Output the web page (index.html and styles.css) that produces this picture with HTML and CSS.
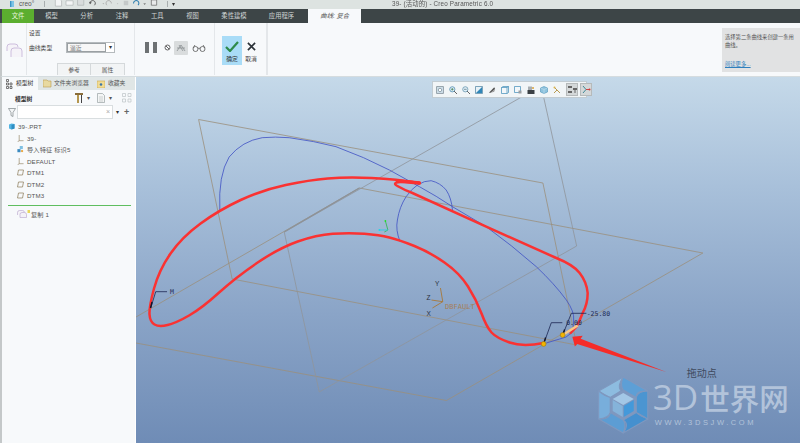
FILE: index.html
```html
<!DOCTYPE html>
<html lang="zh">
<head>
<meta charset="utf-8">
<title>39- (活动的) - Creo Parametric 6.0</title>
<link rel="stylesheet" href="styles.css">
</head>
<body>
<div class="app">
  <header class="titlebar">
    <div class="quick">
      <svg class="q-logo" viewBox="0 0 8 9"><path d="M1 0h6v9H1z" fill="#7cc3e6"/><path d="M1 0h2v9H1z" fill="#3b93c4"/></svg>
      <span class="creo">creo°</span>
      <i class="sep"></i>
      <svg class="q-icons" viewBox="0 0 120 9">
        <g fill="#f3f5f5" stroke="#a9b0b0" stroke-width=".7">
          <path d="M3 0h5l2 2v6H3z"/><path d="M15 2h8v5h-8z"/><path d="M28 0h7v7h-7z" fill="#d8dcdc"/>
        </g>
        <path d="M42 5a3 3 0 1 1 5 2" fill="none" stroke="#555" stroke-width="1"/>
        <path d="M41 3l1 3 2-2z" fill="#555"/>
        <path d="M56 5l2 0-1 1z" fill="#888"/>
        <path d="M66 5a3 3 0 1 0 -5 2" fill="none" stroke="#aaa" stroke-width="1"/>
        <path d="M72 5l2 0-1 1z" fill="#aaa"/>
        <path d="M80 2h5v5h-5z" fill="#c4c9c9"/>
        <path d="M91 5a3 3 0 1 1 5 2" fill="none" stroke="#2f7fb0" stroke-width="1.2"/>
        <path d="M102 5l3 0-1.500 1.500z" fill="#555"/>
        <path d="M111 1h6v6h-6z" fill="#e8eaea" stroke="#666" stroke-width=".8"/>
      </svg>
      <i class="sep"></i>
      <span class="caret">▾</span>
    </div>
    <div class="doc-title">39- (活动的) - Creo Parametric 6.0</div>
  </header>

  <nav class="tabs">
    <span class="tab tab-file">文件</span>
    <span class="tab t1">模型</span>
    <span class="tab t2">分析</span>
    <span class="tab t2">注释</span>
    <span class="tab t2">工具</span>
    <span class="tab t2">视图</span>
    <span class="tab t3">柔性建模</span>
    <span class="tab t3">应用程序</span>
    <span class="tab tab-active">曲线: 复合</span>
  </nav>

  <section class="ribbon">
    <div class="group g-curve">
      <svg class="curve-icon" viewBox="0 0 18 16"><g fill="#f5f3f8" stroke="#bca8d2" stroke-width=".7"><path d="M1 9V5q0-3 3-3h5q3 0 3 3"/><path d="M5 15V9q0-3 3-3h5q3 0 3 3v6"/><path d="M5 11h11" stroke="none"/></g></svg>
    </div>
    <div class="group g-settings">
      <div class="g-label">设置</div>
      <div class="field">
        <span class="f-label">曲线类型</span>
        <span class="select"><span class="select-v">逼近</span><span class="select-b">▾</span></span>
      </div>
      <div class="sub-tabs"><span class="sub-tab st-a">参考</span><span class="sub-tab st-b">属性</span></div>
    </div>
    <div class="group g-run">
      <span class="pause"><i></i><i></i></span>
      <svg class="ic-stop" viewBox="0 0 7 7"><circle cx="3.500" cy="3.500" r="2.500" fill="none" stroke="#555" stroke-width=".9"/><path d="M2 2l3 3" stroke="#555" stroke-width=".9"/></svg>
      <span class="hatch"><svg viewBox="0 0 14 14"><path d="M3 10l4-6 4 6M5 4l4 6M3 7h8" fill="none" stroke="#8a8f92" stroke-width=".8"/></svg></span>
      <svg class="ic-glasses" viewBox="0 0 14 8"><g fill="none" stroke="#666" stroke-width=".9"><circle cx="3.500" cy="5" r="2.500"/><circle cx="10.500" cy="5" r="2.500"/><path d="M6 4.500q1-1 2 0M1 4l2-3M13 4l-2-3"/></g></svg>
    </div>
    <div class="group g-ok">
      <div class="btn-ok">
        <svg viewBox="0 0 14 11"><path d="M1 6l4 4 8-9" fill="none" stroke="#2d8a4a" stroke-width="2.200"/></svg>
        <span>确定</span>
      </div>
      <div class="btn-cancel">
        <svg viewBox="0 0 10 10"><path d="M1 1l8 8M9 1l-8 8" fill="none" stroke="#2b3238" stroke-width="1.800"/></svg>
        <span>取消</span>
      </div>
    </div>
    <aside class="help">
      <p>选择第二条曲线来创建一条用</p>
      <p>曲线。</p>
      <a class="help-link">阅读更多...</a>
    </aside>
  </section>

  <main class="body">
    <div class="edge"></div>
    <aside class="side">
      <div class="side-tabs">
        <span class="s-tab s-active"><svg class="s-ic" viewBox="0 0 7 10"><g fill="none" stroke="#444" stroke-width=".7"><path d="M.5.500h2v2h-2zM.5 4h2v2h-2zM.5 7.500h2v2h-2zM4 4h2v2H4zM4 7.500h2v2H4z"/></g></svg>模型树</span>
        <span class="s-tab s-b"><svg class="s-ic2" viewBox="0 0 9 9"><path d="M0 1h4l1 1h3v6H0z" fill="#e8d9a0" stroke="#b89a50" stroke-width=".6"/></svg>文件夹浏览器</span>
        <span class="s-tab s-c"><svg class="s-ic3" viewBox="0 0 8 8"><path d="M0 1h8v7H0z" fill="#f2dc92" stroke="#c7a951" stroke-width=".6"/><circle cx="4" cy="4.500" r="1.300" fill="#3a75a8"/></svg>收藏夹</span>
      </div>
      <div class="tree-head">
        <span class="tree-title">模型树</span>
        <span class="tree-tools">
          <svg class="ic-ham" viewBox="0 0 8 10"><path d="M0 0h8v2H0z" fill="#8a6d3a"/><path d="M2 2h2v8H2z" fill="#b5974f"/><path d="M6 2h1v8H6z" fill="#444"/></svg>
          <span class="mini">▾</span>
          <svg class="ic-doc" viewBox="0 0 8 10"><path d="M.5.500h5l2 2v7h-7z" fill="#f4f6f6" stroke="#9aa2a4" stroke-width=".7"/><path d="M2 4h4M2 6h4M2 8h4" stroke="#b2b8ba" stroke-width=".6"/></svg>
          <span class="mini">▾</span>
          <svg class="ic-tbl" viewBox="0 0 10 10"><g fill="none" stroke="#bcc3c5" stroke-width=".7"><path d="M.5.500h3v3h-3zM.5 6h3v3h-3zM6 .5h3v3H6zM6 6h3v3H6z"/></g></svg>
        </span>
      </div>
      <div class="search">
        <svg class="ic-filter" viewBox="0 0 8 9"><path d="M.5.500h7L5 4.500v4L3 7.500v-3z" fill="#f4f6f7" stroke="#7d8588" stroke-width=".7"/></svg>
        <span class="search-box"><span class="clear">×</span></span>
        <span class="mini m-dark">▾</span>
        <span class="plus">+</span>
      </div>
      <ul class="tree">
        <li class="row root"><svg class="ti" viewBox="0 0 7 7"><path d="M1 1.500L3.500.5 6.500 1v4.500l-3 1-2.500-1z" fill="#52b4e2"/><path d="M3.500 2v4.500l3-1V1z" fill="#2f8dc2"/></svg>39-.PRT</li>
        <li class="row"><svg class="ti" viewBox="0 0 7 8"><path d="M2 0v6.500h5M2 6.500L0 8" fill="none" stroke="#8a7a58" stroke-width=".7"/></svg>39-</li>
        <li class="row"><svg class="ti" viewBox="0 0 8 9"><path d="M0 4h4v4H0z" fill="#3b8ac0"/><path d="M3 0h4v4H3z" fill="#7fc0e2"/><circle cx="6" cy="6.500" r="1.500" fill="#e8a33a"/></svg>导入特征 标识5</li>
        <li class="row"><svg class="ti" viewBox="0 0 7 8"><path d="M2 0v6.500h5M2 6.500L0 8" fill="none" stroke="#8a7a58" stroke-width=".7"/></svg>DEFAULT</li>
        <li class="row"><svg class="ti" viewBox="0 0 7 6"><path d="M1.500.5h5L5.500 5.500h-5z" fill="none" stroke="#8a7a58" stroke-width=".7"/></svg>DTM1</li>
        <li class="row"><svg class="ti" viewBox="0 0 7 6"><path d="M1.500.5h5L5.500 5.500h-5z" fill="none" stroke="#8a7a58" stroke-width=".7"/></svg>DTM2</li>
        <li class="row"><svg class="ti" viewBox="0 0 7 6"><path d="M1.500.5h5L5.500 5.500h-5z" fill="none" stroke="#8a7a58" stroke-width=".7"/></svg>DTM3</li>
        <li class="insert"></li>
        <li class="row row-copy"><svg class="ti ti-copy" viewBox="0 0 13 8"><g fill="#f4f2f7" stroke="#b7a3cb" stroke-width=".6"><path d="M.5 5V2.500q0-2 2-2h3q2 0 2 2"/><path d="M3 7.500V4.500q0-2 2-2h2.500q2 0 2 2v3z"/></g><path d="M10.500 0h2.500v3h-2.500z" fill="#e8d65a"/></svg>复制 1</li>
      </ul>
    </aside>

    <section class="view">
      <svg class="scene" viewBox="137 77 663 366" preserveAspectRatio="none">
        <g fill="none" stroke="#9a8f7c" stroke-width=".8">
          <path d="M199.500 119.500L543.300 183 577 345 233 279z"/>
          <path d="M360 188L703 253 447 400.500 137 343"/>
          <path d="M360 188L137 317"/>
        </g>
        <g fill="none" stroke="#8f949a" stroke-width=".8">
          <path d="M522 97L285 232 320 392 577 246 544 97"/>
          <path d="M360 188L285 232" stroke-width="1.300" stroke="#8d9298"/>
        </g>
        <g fill="none" stroke="#3f50c4" stroke-width=".8">
          <path d="M220.700 210Q219 175 230 157Q243 141 263 137.700Q276 136.500 290 137.700Q315 141 336.700 146.700Q365 157 390 170L420 186.700Q437 196 453 206.700L486.700 226.700Q512 245 536.700 266.700Q555 284 566.700 300Q575 312 574 320Q574 329 571.700 333Q567 338 560 339L546.700 343"/>
          <path d="M400.700 241.700Q396 230 398 220Q400 207 406.700 196.700Q412 189 418 185Q425 180.500 431.700 180.700Q441 183 446.700 190Q452 198 453 210"/>
        </g>
        <g fill="none" stroke="#fa3232" stroke-width="2.500" stroke-linecap="round">
          <path d="M544 343Q523 347 510 342.500Q497 338 492 332.500Q487 327 482 313.500Q477 300 468.500 286.500Q460 273 445 262.500Q430 252 415 246Q400 240 390 237.500Q380 235 365 233.750Q350 232.500 333.500 233.750Q317 235 298.500 241.500Q280 248 258.500 262.500Q237 277 220 292.500Q203 308 190 315.500Q177 323 168.500 325Q160 327 155.500 324.500Q151 322 150.500 314.500Q150 307 155 288.500Q160 270 171.500 253.500Q183 237 201.500 223.500Q220 210 241.500 200Q263 190 286.500 185Q310 180 328.500 178.500Q347 177 372 178Q397 179 420 183"/>
          <path d="M420 183Q405 181 397 182.500Q394 184 398 186Q405 190 413 193L486.700 226.700L556.700 258Q574 265 580 273Q587 282 588 293Q588 304 583 313Q580 321 576.700 326.700L571 333"/>
          <path d="M398 181L420 183" stroke-width="3.400"/>
        </g>
        <path d="M563 335L578 325.500" fill="none" stroke="#f8c888" stroke-width="2.600"/>
        <polygon points="572.700,336.700 583,335.800 581,338.700 666.500,372 577.500,344 575.200,346.500" fill="#f62c28"/>
        <g fill="none" stroke="#1a2450" stroke-width=".8">
          <path d="M544 344L551.700 322.700H562.700"/>
          <path d="M563 335L571.700 313.300H586.700"/>
          <path d="M151.700 308L156.700 291.700H168"/>
        </g>
        <path d="M544 344L546 337.500M563 335L565 329.500M151.500 308L153 302" stroke="#10142c" stroke-width="1.400"/>
        <g fill="#f4b400" stroke="#9a7c10" stroke-width=".6">
          <circle cx="544" cy="344" r="2.400"/>
          <circle cx="563" cy="335" r="2.400"/>
        </g>
        <g class="dim">
          <text x="566.500" y="325">0.00</text>
          <text x="587" y="316">-25.80</text>
          <text x="171" y="294">M</text>
        </g>
        <g fill="none" stroke-width=".9">
          <path d="M443.300 301.700L441 288" stroke="#a87838"/>
          <path d="M443.300 301.700L432 300" stroke="#a87838"/>
          <path d="M443.300 301.700L433 308" stroke="#a87838"/>
          <path d="M386 221L388.500 230L385 232" stroke="#38b858"/>
          <path d="M388.500 230L380 230" stroke="#30c8e0"/>
        </g>
        <circle cx="386" cy="221" r=".9" fill="#22e022"/>
        <circle cx="380" cy="230" r=".9" fill="#22d8e8"/>
        <g class="csys">
          <text x="435.500" y="286">Y</text>
          <text x="427" y="300">Z</text>
          <text x="427" y="316">X</text>
        </g>
        <text class="datum" x="445.500" y="309">DBFAULT</text>
        <text class="note" x="687" y="377">拖动点</text>

        <g stroke="#7f98bf" stroke-width="1" stroke-linejoin="round">
          <path d="M599 391L623.500 377Q617 386 621 391L610.500 397.500Q603 394 599 391Z" fill="#8dbce0"/>
          <path d="M623.500 377L648 391Q636 390 636.500 397.500L623.500 390Q620 385 623.500 377Z" fill="#5d9fd6"/>
          <path d="M648 391V419Q640 414 636.500 412.500V397.500Q638 391 648 391Z" fill="#4b95d1"/>
          <path d="M648 419L623.500 433Q630 424 623.500 420L636.500 412.500Q640 416 648 419Z" fill="#4590cf"/>
          <path d="M623.500 433L599 419Q610 420 610.500 412.500L623.500 420Q627 425 623.500 433Z" fill="#5c9dd4"/>
          <path d="M599 419V391Q605 396 610.500 397.500V412.500Q609 418 599 419Z" fill="#78aedb"/>
        </g>
        <polygon points="623.500,390 636.500,397.500 636.500,412.500 623.500,420 610.500,412.500 610.500,397.500" fill="#7f98bf"/>
        <polygon points="623.500,393 634,399 623.500,405 613,399" fill="#a3c7e6"/>
        <polygon points="613,400 623,406 623,417 613,411" fill="#85b3da"/>
        <polygon points="634,400 624,406 624,417 634,411" fill="#4499da"/>
        <text class="wm" x="653" y="410"><tspan class="wm-a">3D</tspan><tspan class="wm-b" dx="2">世界网</tspan></text>
        <text class="wm-sub" x="655" y="425.500">WWW.3DSJW.COM</text>
      </svg>

      <div class="viewbar">
        <svg class="vb" viewBox="0 0 7 7"><path d="M.5.500h6v6h-6z" fill="#d4e4ee" stroke="#7f8d96" stroke-width=".7"/><circle cx="3.500" cy="3.500" r="1.500" fill="#fff" stroke="#6f8592" stroke-width=".6"/></svg>
        <svg class="vb" viewBox="0 0 8 8"><circle cx="3.300" cy="3.300" r="2.600" fill="#dfeef6" stroke="#3d7fa6" stroke-width=".7"/><path d="M5 5l3 3" stroke="#555" stroke-width=".9"/><path d="M2 3.300h2.600M3.300 2v2.600" stroke="#2a6a3a" stroke-width=".6"/></svg>
        <svg class="vb" viewBox="0 0 8 8"><circle cx="3.300" cy="3.300" r="2.600" fill="#dfeef6" stroke="#5a8ca8" stroke-width=".7"/><path d="M5 5l3 3" stroke="#555" stroke-width=".9"/><path d="M2 3.300h2.600" stroke="#3a5a6a" stroke-width=".6"/></svg>
        <svg class="vb" viewBox="0 0 8 8"><path d="M.5.500h7v7h-7z" fill="#e8f2f7" stroke="#4a7f9f" stroke-width=".7"/><path d="M7 1L1 7h6z" fill="#2f86b8"/></svg>
        <svg class="vb vb-d" viewBox="0 0 9 8"><path d="M1 7L7 1l1 2-5 4z" fill="#555"/><path d="M3 7L8 3l-1 3z" fill="#999"/></svg>
        <svg class="vb vb-d" viewBox="0 0 8 8"><path d="M.5 1.500h5.500v6H.5z" fill="#f2f7fa" stroke="#3f8cb8" stroke-width=".7"/><path d="M.5 1.500L2 .5h5.500L6 1.500M7.500.5v6L6 7.500" fill="none" stroke="#3f8cb8" stroke-width=".7"/></svg>
        <svg class="vb vb-d" viewBox="0 0 8 8"><path d="M.5.500h6v6h-6z" fill="#f2f7fa" stroke="#3f8cb8" stroke-width=".7"/><path d="M4.500 4.500h3v3h-3z" fill="#9b9fa3"/></svg>
        <svg class="vb" viewBox="0 0 8 8"><path d="M1 .5h4v4H1z" fill="#a8aeb2"/><path d="M.5 4h7v4h-7z" fill="#3b4044"/><circle cx="6" cy="2" r="1" fill="#d9a13a"/></svg>
        <svg class="vb" viewBox="0 0 8 8"><path d="M4 .5L7.500 2v4L4 7.500.5 6V2z" fill="#8ec3de" stroke="#4f94bb" stroke-width=".6"/><path d="M.5 2L4 3.500 7.500 2M4 3.500v4" fill="none" stroke="#cfe6f2" stroke-width=".5"/></svg>
        <svg class="vb vb-d" viewBox="0 0 8 8"><path d="M1 1l3 3 3 3M1 7l3-3" fill="none" stroke="#b89a50" stroke-width="1"/><circle cx="1.500" cy="1.500" r="1" fill="#d9b24a"/></svg>
        <span class="vb-on"><svg viewBox="0 0 9 9"><path d="M0 1h4v2H0zM5 3h4v2H5zM0 6h4v2H0z" fill="#666"/><path d="M7 5v3" stroke="#666"/></svg></span>
        <span class="vb-on"><svg viewBox="0 0 9 9"><path d="M1 1l3 3.500L1 8" fill="none" stroke="#2f7f8f" stroke-width=".9"/><path d="M4 4.500h4" stroke="#c73a3a" stroke-width=".9"/><circle cx="7.500" cy="4.500" r="1" fill="#d03a3a"/></svg></span>
      </div>
    </section>
  </main>
</div>
</body>
</html>
```
FILE: styles.css
```css
* { box-sizing: border-box; }
html, body { margin: 0; padding: 0; }
body { width: 800px; height: 443px; overflow: hidden; background: #fff; font-family: "Liberation Sans", "Noto Sans CJK SC", sans-serif; color: #333; }
.app { width: 800px; height: 443px; display: flex; flex-direction: column; filter: blur(.35px); }

.titlebar { height: 9px; flex: none; background: #dde3e1; display: flex; position: relative; overflow: hidden; }
.quick { display: flex; align-items: center; height: 7px; padding-left: 8px; }
.q-logo { width: 8px; height: 6px; margin-right: 3px; }
.creo { font-size: 6.500px; color: #555; width: 24px; line-height: 7px; }
.sep { width: 1px; height: 6px; background: #a8aeae; margin: 0 1px; }
.q-icons { width: 114px; height: 8px; margin-top: -2px; margin-left: 3px; margin-right: 3px; }
.caret { font-size: 6px; color: #333; margin-left: 3px; line-height: 6px; }
.doc-title { position: absolute; left: 392px; top: 0; font-size: 6.300px; line-height: 7px; color: #555; white-space: nowrap; letter-spacing: .17px; }

.tabs { height: 14px; flex: none; display: flex; background: #3d4547; padding-left: 2px; }
.tab { font-size: 6.300px; line-height: 14px; color: #cfd4d4; text-align: center; white-space: nowrap; }
.tab-file { width: 32px; background: #5bae2f; color: #e8f4df; }
.t1 { width: 35px; }
.t2 { width: 35.300px; }
.t3 { width: 47.500px; }
.tab-active { width: 53px; margin-left: 3px; background: #f7f9fb; color: #555; font-style: italic; }

.ribbon { height: 54px; flex: none; display: flex; background: #f7f9fb; border-bottom: 1px solid #d5dcdf; border-left: 2px solid #c4c8c9; }
.group { border-right: 1px solid #e4e7ea; height: 52px; flex: none; }
.g-curve { width: 25px; padding: 19px 0 0 4px; }
.curve-icon { width: 18px; height: 16px; display: block; }
.g-settings { width: 108px; padding: 7px 0 0 2px; position: relative; }
.g-label { font-size: 5.800px; line-height: 7px; color: #444; }
.field { display: flex; align-items: center; margin-top: 5px; height: 11px; }
.f-label { font-size: 5.800px; width: 37px; color: #444; }
.select { width: 49px; height: 11px; display: flex; border: 1px solid #b5babd; background: #fff; }
.select-v { width: 39px; font-size: 5.800px; line-height: 8px; color: #777; padding-left: 2px; border: 1px solid #9aa0a3; background: #f7f7f7; }
.select-b { flex: 1; font-size: 6px; line-height: 9px; text-align: center; color: #333; }
.sub-tabs { position: absolute; left: 30px; bottom: 0; display: flex; }
.sub-tab { height: 12px; font-size: 5.800px; line-height: 12px; text-align: center; color: #555; background: #f2f4f5; border: 1px solid #d5d9db; border-bottom: 0; }
.st-a { width: 34px; }
.st-b { width: 34px; border-left: 0; }

.g-run { width: 80px; display: flex; align-items: center; height: 52px; padding: 0 0 3px 10px; }
.pause { display: flex; gap: 4px; width: 12px; margin-top: 0; }
.pause i { display: block; width: 4px; height: 11px; background: #6d7173; }
.ic-stop { width: 7px; height: 7px; margin-left: 7px; }
.hatch { width: 14px; height: 14px; background: #d9dcdd; margin-left: 3px; display: block; border-radius: 1px; }
.hatch svg { display: block; width: 14px; height: 14px; }
.ic-glasses { width: 14px; height: 8px; margin-left: 4px; }

.g-ok { width: 53px; display: flex; padding: 13px 0 0 7px; border-right-width: 2px; }
.btn-ok { width: 20px; height: 29px; background: #a9dcf7; display: flex; flex-direction: column; align-items: center; padding-top: 5px; }
.btn-ok svg { width: 14px; height: 11px; }
.btn-ok span, .btn-cancel span { font-size: 5.800px; line-height: 7px; margin-top: 4px; color: #333; }
.btn-cancel { width: 16px; display: flex; flex-direction: column; align-items: center; margin-left: 1px; padding-top: 6px; }
.btn-cancel svg { width: 9px; height: 9px; }
.btn-cancel span { margin-top: 5px; color: #444; }

.help { margin: 5px 0 0 auto; width: 78px; height: 44px; background: #e1e2e3; padding: 5px 0 0 3px; overflow: hidden; font-size: 5.300px; line-height: 8px; color: #555; white-space: nowrap; }
.help p { margin: 0; }
.help-link { display: block; margin-top: 11px; color: #2e7fbd; text-decoration: underline; }

.body { flex: 1; display: flex; min-height: 0; }
.edge { width: 2px; flex: none; background: #c4c8c9; }
.side { width: 134px; flex: none; background: #f7f9fb; border-right: 1px solid #fff; font-size: 6.200px; color: #555; }
.side-tabs { height: 13px; display: flex; background: #e0e6e6; }
.s-tab { font-size: 5.800px; line-height: 13px; display: flex; align-items: center; white-space: nowrap; color: #555; }
.s-active { width: 36px; background: #f7f9fb; padding-left: 4px; color: #333; }
.s-ic { width: 7px; height: 10px; margin-right: 3px; }
.s-b { width: 59px; padding-left: 5px; }
.s-ic2 { width: 9px; height: 9px; margin-right: 2px; }
.s-c { padding-left: 0; }
.s-ic3 { width: 8px; height: 8px; margin-right: 3px; }
.tree-head { height: 15px; display: flex; align-items: center; justify-content: space-between; padding: 1px 3px 0 13px; }
.tree-title { font-size: 5.800px; color: #333; font-weight: 700; }
.tree-tools { display: flex; align-items: center; }
.ic-ham { width: 8px; height: 10px; }
.ic-doc { width: 8px; height: 10px; margin-left: 3px; }
.ic-tbl { width: 10px; height: 10px; margin-left: 6px; }
.mini { font-size: 5.500px; color: #555; margin-left: 4px; width: 7px; }
.search { display: flex; align-items: center; height: 14px; padding-left: 6px; }
.ic-filter { width: 8px; height: 9px; }
.search-box { width: 96px; height: 14px; margin-left: 1px; background: #fff; border: 1px solid #d9dee0; position: relative; }
.clear { position: absolute; right: 2px; top: 2px; font-size: 7px; line-height: 8px; color: #aaa; }
.m-dark { margin-left: 1px; color: #333; width: 6px; text-align: center; }
.plus { font-size: 9px; font-weight: 700; line-height: 10px; margin-left: 4px; color: #666; }
.tree { list-style: none; margin: 2px 0 0; padding: 0 4px 0 15px; }
.row { height: 11.500px; line-height: 11.500px; display: flex; align-items: center; white-space: nowrap; padding-left: 0; color: #555; letter-spacing: .15px; }
.root { margin-left: -9px; }
.ti { width: 7px; height: 7px; margin-right: 3px; flex: none; }
.root .ti { margin-right: 3px; }
.insert { height: 1px; background: #5fbe5f; margin: 3px 0 3px -9px; }
.row-copy { padding-top: 0; }
.ti-copy { width: 13px; height: 8px; margin-right: 1px; }

.view { flex: 1; position: relative; background: linear-gradient(#c5d9e9 0%, #a8c0da 30%, #8aa4c7 65%, #6f8cb6 100%); overflow: hidden; }
.scene { position: absolute; left: 0; top: 0; width: 100%; height: 100%; display: block; }
.dim text { font: 6.500px "DejaVu Sans Mono", "Liberation Mono", monospace; fill: #1d2a55; }
.csys text { font: 6.500px "Liberation Sans", sans-serif; fill: #2a3040; }
.datum { font: 7px "DejaVu Sans Mono", monospace; fill: #a5805a; letter-spacing: .05px; }
.note { font: 10px "Noto Sans CJK SC", sans-serif; fill: #3f4a5e; }
.wm { fill: #b2c3da; }
.wm-a { font: 400 35px "Open Sans", "Liberation Sans", sans-serif; }
.wm-b { font: 500 29.500px "Noto Sans CJK SC", sans-serif; }
.wm-sub { font: 7.500px "Liberation Sans", sans-serif; fill: #b2c3da; letter-spacing: 2.600px; }

.viewbar { position: absolute; left: 296px; top: 4px; width: 155px; height: 17px; background: #f1f5f7; border: 1px solid #c2ccd2; display: flex; align-items: center; padding-left: 3px; gap: 5px; }
.vb { width: 8px; height: 8px; flex: none; }
.vb-d { width: 8px; }
.vb-on { width: 12px; height: 13px; background: #d4d8d9; border: 1px solid #b6babb; display: flex; align-items: center; justify-content: center; flex: none; margin-right: -3px; }
.vb-on svg { width: 9px; height: 9px; }
```
